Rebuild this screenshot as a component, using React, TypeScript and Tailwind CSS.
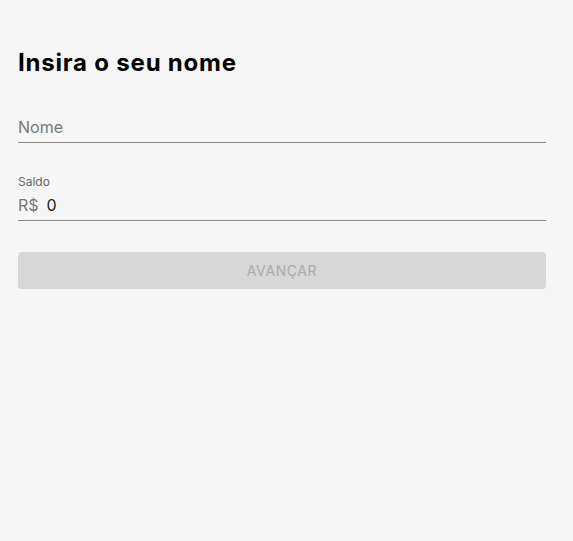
import React, { useState } from "react";

const App: React.FC = () => {
  const [nome, setNome] = useState("");
  const [saldo, setSaldo] = useState("0");

  const disabled = nome.trim().length === 0;

  return (
    <div className="min-h-[541px] bg-[#f6f6f6] pl-[18px] pr-[27px] pt-[47px]" style={{ fontFamily: "Inter, 'Liberation Sans', sans-serif" }}>
      <h1 className="text-[24px] font-bold leading-[32px] text-black tracking-[0.8px]">Insira o seu nome</h1>

      <div className="mt-[36px] border-b border-[#8a8a8a]">
        <input
          value={nome}
          onChange={e => setNome(e.target.value)}
          placeholder="Nome"
          className="w-full bg-transparent pb-[3px] text-[16px] leading-[24px] text-[#222] placeholder:text-[#777] outline-none"
        />
      </div>

      <div className="mt-[32px] border-b border-[#8a8a8a]">
        <label className="block text-[12px] leading-[14px] text-[#666]">Saldo</label>
        <div className="flex items-center pt-[4px] pb-[3px]">
          <span className="text-[16px] leading-[24px] text-[#777] mr-[8px]">R$</span>
          <input
            value={saldo}
            onChange={e => setSaldo(e.target.value)}
            className="w-full bg-transparent text-[16px] leading-[24px] text-[#222] outline-none"
          />
        </div>
      </div>

      <button
        disabled={disabled}
        className="mt-[31px] w-full h-[37px] rounded-[4px] bg-[#d7d7d7] text-[14px] font-normal tracking-[0.6px] text-[#ababab] disabled:cursor-default"
      >
        AVANÇAR
      </button>
    </div>
  );
};

export default App;
